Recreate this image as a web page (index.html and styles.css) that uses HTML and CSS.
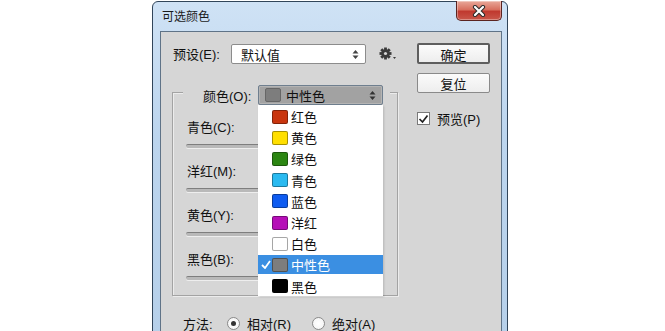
FILE: index.html
```html
<!DOCTYPE html>
<html lang="zh-CN">
<head>
    <meta charset="UTF-8">
    <title>可选颜色</title>
    <link rel="stylesheet" href="styles.css">
</head>
<body>
    <div class="window">
        <div class="titlebar">
            <span class="title">可选颜色</span>
            <button class="close" aria-label="关闭">
                <svg width="14" height="12" viewBox="0 0 14 12">
                    <path d="M3 2 L11 10 M11 2 L3 10" stroke="#2b2b2b" stroke-width="4.2" stroke-linecap="round"/>
                    <path d="M3 2 L11 10 M11 2 L3 10" stroke="#ffffff" stroke-width="2.2" stroke-linecap="round"/>
                </svg>
            </button>
        </div>

        <div class="client">
            <div class="main">
                <div class="preset-row">
                    <span class="preset-label">预设(E):</span>
                    <div class="select preset-select">
                        <span>默认值</span>
                        <svg class="arrows" width="7" height="9" viewBox="0 0 7 9">
                            <path d="M3.5 0 L6.5 3.5 H0.5 Z M3.5 9 L6.5 5.5 H0.5 Z" fill="#444"/>
                        </svg>
                    </div>
                    <svg class="gear" width="19" height="14" viewBox="0 0 19 14">
                        <g transform="translate(6.5 6.5)" fill="#3a3a3a">
                            <rect x="-1.4" y="-6" width="2.8" height="12"/>
                            <rect x="-1.4" y="-6" width="2.8" height="12" transform="rotate(45)"/>
                            <rect x="-1.4" y="-6" width="2.8" height="12" transform="rotate(90)"/>
                            <rect x="-1.4" y="-6" width="2.8" height="12" transform="rotate(135)"/>
                            <circle r="4.2"/>
                            <circle r="1.6" fill="#d6d6d6"/>
                        </g>
                        <path d="M14 10 L17 10 L15.5 12 Z" fill="#3a3a3a"/>
                    </svg>
                </div>

                <div class="group">
                    <div class="group-head">
                        <span class="group-label">颜色(O):</span>
                        <div class="color-wrap">
                            <div class="select color-select">
                                <span class="swatch" style="background:#7d7d7d"></span>
                                <span>中性色</span>
                                <svg class="arrows" width="7" height="9" viewBox="0 0 7 9">
                                    <path d="M3.5 0 L6.5 3.5 H0.5 Z M3.5 9 L6.5 5.5 H0.5 Z" fill="#333"/>
                                </svg>
                            </div>
                            <ul class="dropdown">
                                <li><span class="swatch" style="background:#c9360f"></span>红色</li>
                                <li><span class="swatch" style="background:#ffdf00"></span>黄色</li>
                                <li><span class="swatch" style="background:#2c8612"></span>绿色</li>
                                <li><span class="swatch" style="background:#2bbaf0"></span>青色</li>
                                <li><span class="swatch" style="background:#0f5cf0"></span>蓝色</li>
                                <li><span class="swatch" style="background:#b60fb8"></span>洋红</li>
                                <li><span class="swatch" style="background:#ffffff"></span>白色</li>
                                <li class="active">
                                    <svg class="tick" width="10" height="9" viewBox="0 0 10 9">
                                        <path d="M1 5 L4 8 L9 1" stroke="#fff" stroke-width="1.8" fill="none"/>
                                    </svg>
                                    <span class="swatch" style="background:#7d7d7d"></span>中性色
                                </li>
                                <li><span class="swatch" style="background:#000000"></span>黑色</li>
                            </ul>
                        </div>
                    </div>

                    <div class="sliders">
                        <div class="slider">
                            <div class="slider-label">青色(C):</div>
                            <div class="track"></div>
                        </div>
                        <div class="slider">
                            <div class="slider-label">洋红(M):</div>
                            <div class="track"></div>
                        </div>
                        <div class="slider">
                            <div class="slider-label">黄色(Y):</div>
                            <div class="track"></div>
                        </div>
                        <div class="slider">
                            <div class="slider-label">黑色(B):</div>
                            <div class="track"></div>
                        </div>
                    </div>
                </div>

                <div class="method-row">
                    <span class="method-label">方法:</span>
                    <span class="radio checked"></span>
                    <span class="radio-text">相对(R)</span>
                    <span class="radio"></span>
                    <span class="radio-text">绝对(A)</span>
                </div>
            </div>

            <div class="side">
                <button class="btn btn-default">确定</button>
                <button class="btn">复位</button>
                <div class="check">
                    <span class="check-box">
                        <svg width="11" height="10" viewBox="0 0 11 10">
                            <path d="M1.5 5 L4.5 8 L9.5 1.5" stroke="#222" stroke-width="1.7" fill="none"/>
                        </svg>
                    </span>
                    预览(P)
                </div>
            </div>
        </div>
    </div>
</body>
</html>
```

FILE: styles.css
```css
* {
    margin: 0;
    padding: 0;
    box-sizing: border-box;
}

body {
    background: #ffffff;
    font-family: "Liberation Sans", "Noto Sans CJK SC", sans-serif;
    font-size: 13px;
    color: #111;
    overflow: hidden;
}

.window {
    width: 356px;
    height: 340px;
    margin: 1px 0 0 152px;
    padding: 0 5px 0 7px;
    border: 1px solid #31455a;
    border-radius: 6px 6px 0 0;
    background: linear-gradient(180deg, #cfe2f5 0%, #bcd5ee 40%, #b6d0ea 100%);
}

.titlebar {
    height: 29px;
    display: flex;
    align-items: flex-start;
    justify-content: space-between;
}

.title {
    padding: 7px 0 0 2px;
    font-size: 12px;
    line-height: 16px;
    color: #1a1a1a;
}

.close {
    width: 46px;
    height: 20px;
    margin-top: -1px;
    border: 1px solid #5b2420;
    border-top: none;
    border-radius: 0 0 5px 5px;
    background: linear-gradient(180deg, #e9a99a 0%, #d8705f 45%, #c0392f 55%, #c9574a 100%);
    display: flex;
    align-items: center;
    justify-content: center;
    box-shadow: inset 0 0 0 1px rgba(255, 255, 255, 0.35);
}

.client {
    height: 310px;
    border: 1px solid #5f7387;
    background: #d6d6d6;
    display: flex;
    padding: 11px 0 0 11px;
}

.main {
    width: 226px;
}

.preset-row {
    height: 21px;
    display: flex;
    align-items: center;
}

.preset-label {
    width: 59px;
    padding-left: 1px;
}

.select {
    display: flex;
    align-items: center;
    height: 20px;
    border: 1px solid #8c8c8c;
    border-radius: 2px;
    position: relative;
}

.select .arrows {
    position: absolute;
    right: 6px;
    top: 5px;
}

.preset-select {
    width: 135px;
    margin-top: 1px;
    padding-left: 9px;
    background: #ffffff;
}

.gear {
    margin: 1px 0 0 13px;
}

.group {
    margin-top: 28px;
    height: 204px;
    border: 1px solid #a3a3a3;
    box-shadow: 1px 1px 0 #ececec, inset 1px 1px 0 #ececec;
}

.group-head {
    display: flex;
    align-items: center;
    height: 20px;
    margin: -8px 7px 0 10px;
    background: #d6d6d6;
}

.group-label {
    width: 55px;
    padding-left: 20px;
    box-sizing: content-box;
}

.color-wrap {
    position: relative;
    width: 125px;
}

.color-select {
    background: #a2a2a2;
    border-color: #6f7f8f;
    padding-left: 6px;
    box-shadow: inset 0 0 0 1px #b4b4b4;
}

.swatch {
    width: 16px;
    height: 14px;
    border-radius: 2px;
    margin-right: 3px;
    border: 1px solid rgba(0, 0, 0, 0.35);
    flex-shrink: 0;
}

.color-select .swatch {
    border-color: #666;
    margin-right: 5px;
}

.dropdown {
    position: absolute;
    left: 0;
    top: 20px;
    width: 125px;
    height: 191px;
    padding-top: 1px;
    list-style: none;
    background: #ffffff;
    box-shadow: 1px 1px 2px rgba(0, 0, 0, 0.15);
    z-index: 2;
}

.dropdown li {
    height: 21.2px;
    display: flex;
    align-items: center;
    padding-left: 14px;
    position: relative;
}

.dropdown li.active {
    background: #3b8fe2;
    color: #ffffff;
    height: 19px;
    margin: 1px 0 1.2px;
}

.tick {
    position: absolute;
    left: 3px;
    top: 5px;
}

.sliders {
    padding: 15px 0 0 13px;
}

.slider-label {
    height: 16px;
    line-height: 16px;
    padding-left: 1px;
}

.track {
    width: 190px;
    height: 4px;
    margin: 8px 0 16px;
    border-radius: 2px;
    background: #b9b9b9;
    border-top: 1px solid #7e7e7e;
    box-shadow: 0 1px 0 #eeeeee;
}

.method-row {
    margin-top: 19px;
    padding-left: 11px;
    display: flex;
    align-items: center;
    height: 16px;
}

.method-label {
    width: 44px;
}

.radio {
    width: 13px;
    height: 13px;
    border-radius: 50%;
    border: 1px solid #8a8a8a;
    background: radial-gradient(circle, #ffffff 0%, #f2f2f2 100%);
    position: relative;
}

.radio.checked::after {
    content: "";
    position: absolute;
    left: 3px;
    top: 3px;
    width: 5px;
    height: 5px;
    border-radius: 50%;
    background: #333;
}

.radio-text {
    margin: 0 13px 0 7px;
    width: 52px;
}

.side {
    width: 73px;
    margin-left: 19px;
    display: flex;
    flex-direction: column;
}

.btn {
    height: 20px;
    font-family: inherit;
    font-size: 13px;
    color: #111;
    border: 1px solid #8a8a8a;
    border-radius: 2px;
    background: linear-gradient(180deg, #fbfbfb 0%, #ededed 100%);
}

.btn-default {
    height: 21px;
    border: 2px solid #5e5e5e;
}

.btn + .btn {
    margin-top: 9px;
}

.check {
    margin-top: 19px;
    display: flex;
    align-items: center;
    height: 13px;
}

.check-box {
    width: 13px;
    height: 13px;
    border: 1px solid #7a7a7a;
    background: #ffffff;
    margin-right: 7px;
    display: flex;
    align-items: center;
    justify-content: center;
}
```
